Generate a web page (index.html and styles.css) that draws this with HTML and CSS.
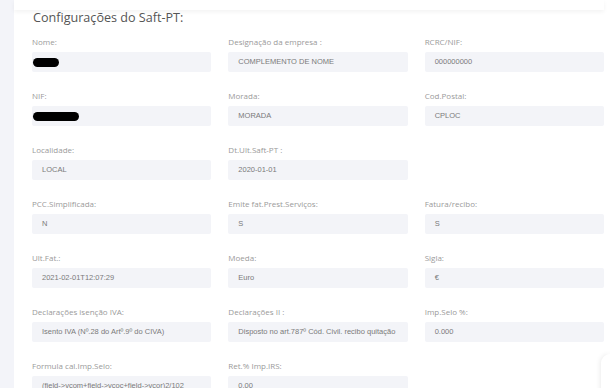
FILE: index.html
```html
<!DOCTYPE html>
<html lang="pt">
<head>
  <meta charset="UTF-8">
  <title>Configurações do Saft-PT</title>
  <link rel="stylesheet" href="styles.css">
</head>
<body>

  <!-- ====== Sidebar strip ====== -->
  <aside class="sidebar"></aside>

  <main class="main">
    <div class="topbar"></div>

    <section class="card">
      <h2>Configurações do Saft-PT:</h2>

      <div class="form-grid">
        <div class="field">
          <label>Nome:</label>
          <div class="input"><span class="redact redact-short"></span></div>
        </div>
        <div class="field">
          <label>Designação da empresa :</label>
          <div class="input">COMPLEMENTO DE NOME</div>
        </div>
        <div class="field">
          <label>RCRC/NIF:</label>
          <div class="input">000000000</div>
        </div>

        <div class="field">
          <label>NIF:</label>
          <div class="input"><span class="redact redact-long"></span></div>
        </div>
        <div class="field">
          <label>Morada:</label>
          <div class="input">MORADA</div>
        </div>
        <div class="field">
          <label>Cod.Postal:</label>
          <div class="input">CPLOC</div>
        </div>

        <div class="field">
          <label>Localidade:</label>
          <div class="input">LOCAL</div>
        </div>
        <div class="field">
          <label>Dt.Ult.Saft-PT :</label>
          <div class="input">2020-01-01</div>
        </div>
        <div class="field"></div>

        <div class="field">
          <label>PCC.Simplificada:</label>
          <div class="input">N</div>
        </div>
        <div class="field">
          <label>Emite fat.Prest.Serviços:</label>
          <div class="input">S</div>
        </div>
        <div class="field">
          <label>Fatura/recibo:</label>
          <div class="input">S</div>
        </div>

        <div class="field">
          <label>Ult.Fat.:</label>
          <div class="input">2021-02-01T12:07:29</div>
        </div>
        <div class="field">
          <label>Moeda:</label>
          <div class="input">Euro</div>
        </div>
        <div class="field">
          <label>Sigla:</label>
          <div class="input">€</div>
        </div>

        <div class="field">
          <label>Declarações isenção IVA:</label>
          <div class="input">Isento IVA (Nº.28 do Artº.9º do CIVA)</div>
        </div>
        <div class="field">
          <label>Declarações II :</label>
          <div class="input">Disposto no art.787º Cód. Civil. recibo quitação</div>
        </div>
        <div class="field">
          <label>Imp.Selo %:</label>
          <div class="input">0.000</div>
        </div>

        <div class="field">
          <label>Formula cal.Imp.Selo:</label>
          <div class="input">(field-&gt;vcom+field-&gt;vcoc+field-&gt;vcor)2/102</div>
        </div>
        <div class="field">
          <label>Ret.% Imp.IRS:</label>
          <div class="input">0.00</div>
        </div>
        <div class="field"></div>
      </div>
    </section>
  </main>

  <!-- floating button, only its left edge is on screen -->
  <div class="fab"></div>

</body>
</html>
```

FILE: styles.css
```css
/* ====== General Styles ====== */
body {
  margin: 0;
  display: flex;
  height: 100vh;
  background: #fff;
  font-family: "Open Sans", sans-serif;
  color: #555;
  overflow: hidden;
}

.sidebar {
  width: 14px;
  flex-shrink: 0;
  background: #f3f4f9;
}

.main {
  flex: 1;
  padding-right: 6px;
}

.topbar {
  height: 10px;
  background: #fff;
  box-shadow: 0 2px 4px rgba(0, 0, 0, 0.05);
}

/* ====== Card ====== */
.card {
  padding: 0 0 0 18px;
}

.card h2 {
  margin: 0 0 10px 1px;
  font-size: 12.6px;
  font-weight: 400;
  line-height: 16px;
  color: #555;
}

.form-grid {
  display: grid;
  grid-template-columns: repeat(3, 1fr);
  column-gap: 17px;
  row-gap: 18px;
}

.field {
  display: flex;
  flex-direction: column;
}

.field label {
  font-size: 8px;
  line-height: 12px;
  margin-bottom: 4px;
  color: #9a9a9a;
}

.input {
  height: 20px;
  padding-left: 10px;
  background: #f3f4f8;
  border-radius: 2px;
  font-family: "Liberation Sans", Arial, sans-serif;
  font-size: 7.5px;
  line-height: 20px;
  color: #7a7a7a;
  white-space: nowrap;
  overflow: hidden;
}

.redact {
  display: inline-block;
  margin-left: -9px;
  height: 9px;
  background: #000;
  border-radius: 5px;
  vertical-align: middle;
}

.redact-short {
  width: 26px;
}

.redact-long {
  width: 46px;
}

.fab {
  position: absolute;
  left: 601px;
  top: 354px;
  width: 9px;
  height: 44px;
  border-radius: 22px 0 0 22px;
  background: #fff;
  box-shadow: -1px 0 5px rgba(0, 0, 0, 0.08);
}
```
